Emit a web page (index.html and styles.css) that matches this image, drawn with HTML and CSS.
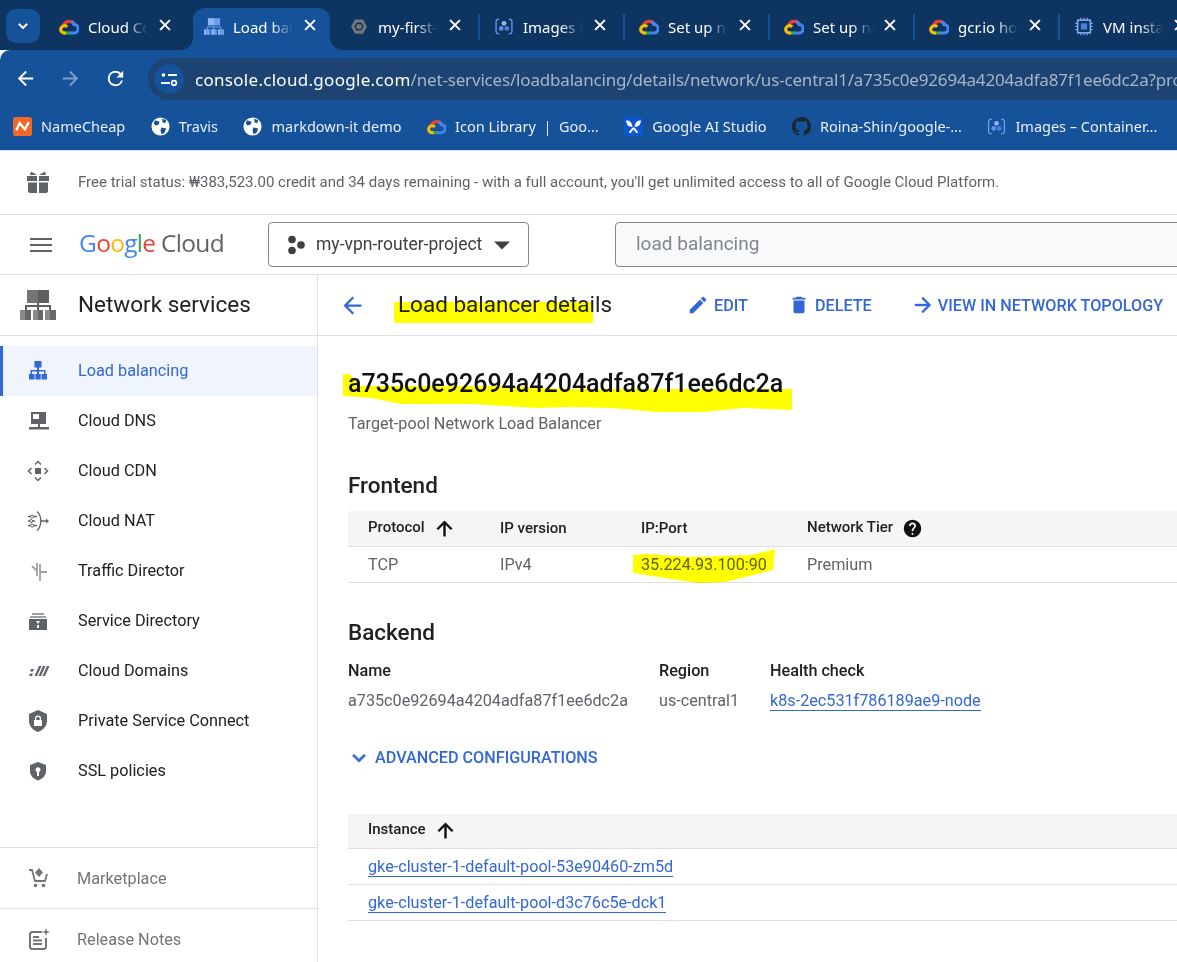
FILE: index.html
```html
<!DOCTYPE html>
<html lang="en">
<head>
    <meta charset="UTF-8">
    <title>Load balancer details</title>
    <link rel="stylesheet" href="styles.css">
</head>
<body>
    <svg class="defs" width="0" height="0">
        <symbol id="gcloud" viewBox="0 0 24 20">
            <path d="M5.500 8.500A7.300 7.300 0 0 1 18.300 7" fill="none" stroke="#ea4335" stroke-width="3.800"/>
            <path d="M15 4A7.300 7.300 0 0 1 18 7.500 5 5 0 0 1 17.800 17.800H12.500" fill="none" stroke="#4285f4" stroke-width="3.800"/>
            <path d="M5 17.800H13" fill="none" stroke="#34a853" stroke-width="3.800"/>
            <path d="M8.500 17.800H6.500A4.400 4.400 0 1 1 9.800 10.500" fill="none" stroke="#fbbc04" stroke-width="3.800"/>
        </symbol>
        <symbol id="globe" viewBox="0 0 20 20">
            <circle cx="10" cy="10" r="9.500" fill="#fff"/>
            <path d="M4 3.500 9 5 8 8 5 9 3 7zM11 11l5 1-2 5-3 1-1-4zM12 1.500l4 2-1 3-3-1z" fill="#16529a"/>
        </symbol>
        <symbol id="images" viewBox="0 0 24 24">
            <path d="M6 3H3.500L2 5v14l1.500 2H6M18 3h2.500L22 5v14l-1.500 2H18" fill="none" stroke="#6f9cf0" stroke-width="1.600"/>
            <circle cx="12" cy="8" r="3" fill="#8fb4f5"/>
            <circle cx="8.500" cy="14.500" r="3" fill="#5f8fe8"/>
            <circle cx="15.500" cy="14.500" r="3" fill="#4a7ddd"/>
        </symbol>
        <symbol id="topology" viewBox="0 0 36 30">
            <rect x="7" width="11" height="13" fill="#757575"/>
            <rect x="18" width="11" height="13" fill="#5f5f5f"/>
            <path d="M18 13v7M6 20v-4h24v4" fill="none" stroke="#5f5f5f" stroke-width="2"/>
            <rect y="20" width="5" height="10" fill="#8a8a8a"/>
            <rect x="5" y="20" width="6" height="10" fill="#666"/>
            <rect x="13" y="20" width="5" height="10" fill="#8a8a8a"/>
            <rect x="18" y="20" width="5" height="10" fill="#666"/>
            <rect x="25" y="20" width="5" height="10" fill="#8a8a8a"/>
            <rect x="30" y="20" width="6" height="10" fill="#666"/>
        </symbol>
        <symbol id="topology-blue" viewBox="0 0 36 30">
            <rect x="7" width="11" height="13" fill="#8fb4f5"/>
            <rect x="18" width="11" height="13" fill="#6f9cf0"/>
            <path d="M18 13v7M6 20v-4h24v4" fill="none" stroke="#6f9cf0" stroke-width="2"/>
            <rect y="20" width="5" height="10" fill="#8fb4f5"/>
            <rect x="5" y="20" width="6" height="10" fill="#6f9cf0"/>
            <rect x="13" y="20" width="5" height="10" fill="#8fb4f5"/>
            <rect x="18" y="20" width="5" height="10" fill="#6f9cf0"/>
            <rect x="25" y="20" width="5" height="10" fill="#8fb4f5"/>
            <rect x="30" y="20" width="6" height="10" fill="#6f9cf0"/>
        </symbol>
        <symbol id="close" viewBox="0 0 24 24">
            <path d="M19 6.410 17.590 5 12 10.590 6.410 5 5 6.410 10.590 12 5 17.590 6.410 19 12 13.410 17.590 19 19 17.590 13.410 12z"/>
        </symbol>
        <symbol id="arrow-up" viewBox="0 0 24 24">
            <path d="M4 12l1.410 1.410L11 7.830V20h2V7.830l5.580 5.590L20 12l-8-8-8 8z"/>
        </symbol>
    </svg>

    <div class="tabstrip">
        <button class="tab-menu">
            <svg width="18" height="18" viewBox="0 0 24 24"><path d="M16.590 8.590 12 13.170 7.410 8.590 6 10l6 6 6-6z" fill="#fff" stroke="#fff"/></svg>
        </button>
        <div class="tab">
            <svg class="tab-icon"><use href="#gcloud"/></svg>
            <span class="tab-title">Cloud Console</span>
            <svg class="tab-close"><use href="#close"/></svg>
        </div>
        <div class="tab tab-active">
            <svg class="tab-icon"><use href="#topology-blue"/></svg>
            <span class="tab-title">Load balancing</span>
            <svg class="tab-close"><use href="#close"/></svg>
        </div>
        <div class="tab tab-sep">
            <svg class="tab-icon" viewBox="0 0 24 24"><path d="M7 3h10l5 9-5 9H7l-5-9z" fill="#77777a"/><path d="M9 7h6l3 5-3 5H9l-3-5z" fill="#0e3461"/><path d="M10 9h4l2 3-2 3h-4l-2-3z" fill="#77777a"/></svg>
            <span class="tab-title">my-first-cluster</span>
            <svg class="tab-close"><use href="#close"/></svg>
        </div>
        <div class="tab tab-sep">
            <svg class="tab-icon"><use href="#images"/></svg>
            <span class="tab-title">Images for</span>
            <svg class="tab-close"><use href="#close"/></svg>
        </div>
        <div class="tab tab-sep">
            <svg class="tab-icon"><use href="#gcloud"/></svg>
            <span class="tab-title">Set up network</span>
            <svg class="tab-close"><use href="#close"/></svg>
        </div>
        <div class="tab tab-sep">
            <svg class="tab-icon"><use href="#gcloud"/></svg>
            <span class="tab-title">Set up network</span>
            <svg class="tab-close"><use href="#close"/></svg>
        </div>
        <div class="tab tab-sep">
            <svg class="tab-icon"><use href="#gcloud"/></svg>
            <span class="tab-title">gcr.io hosted</span>
            <svg class="tab-close"><use href="#close"/></svg>
        </div>
        <div class="tab tab-sep">
            <svg class="tab-icon" viewBox="0 0 24 24"><path d="M8 1v22M12 1v22M16 1v22M1 8h22M1 12h22M1 16h22" stroke="#7fa6ef" stroke-width="1.500"/><rect x="4" y="4" width="16" height="16" fill="#0e3461" stroke="#7fa6ef" stroke-width="2"/><rect x="8" y="8" width="8" height="8" fill="#4a7ddd"/></svg>
            <span class="tab-title">VM instances</span>
            <svg class="tab-close"><use href="#close"/></svg>
        </div>
    </div>

    <div class="toolbar">
        <svg class="nav-icon" viewBox="0 0 24 24"><path d="M20 11H7.830l5.590-5.590L12 4l-8 8 8 8 1.410-1.410L7.830 13H20z" fill="#fff"/></svg>
        <svg class="nav-icon" viewBox="0 0 24 24"><path d="M12 4l-1.410 1.410L16.170 11H4v2h12.170l-5.580 5.590L12 20l8-8z" fill="#7f9fc8"/></svg>
        <svg class="nav-icon" viewBox="0 0 24 24"><path d="M17.650 6.350A7.960 7.960 0 0 0 12 4a8 8 0 1 0 7.730 10h-2.080A6 6 0 1 1 12 6c1.660 0 3.140.690 4.220 1.780L13 11h7V4z" fill="#fff"/></svg>
        <div class="urlbar">
            <span class="site-info">
                <svg width="18" height="18" viewBox="0 0 18 18"><circle cx="3.500" cy="5" r="1.800" fill="#fff"/><path d="M8 5h9M1 13h9" stroke="#fff" stroke-width="1.800" fill="none"/><circle cx="14" cy="13" r="2.300" fill="none" stroke="#fff" stroke-width="1.700"/></svg>
            </span>
            <span class="url"><span class="url-host">console.cloud.google.com</span>/net-services/loadbalancing/details/network/us-central1/a735c0e92694a4204adfa87f1ee6dc2a?project=my-vpn-router-project</span>
        </div>
    </div>

    <div class="bookmarks">
        <span class="bookmark">
            <svg class="bm-icon" viewBox="0 0 20 20"><rect width="20" height="20" rx="3" fill="#f0682a"/><path d="M3.500 14 7 6.500 12.500 13 16.500 5.500" fill="none" stroke="#fff" stroke-width="2.400"/></svg>NameCheap
        </span>
        <span class="bookmark"><svg class="bm-icon"><use href="#globe"/></svg>Travis</span>
        <span class="bookmark"><svg class="bm-icon"><use href="#globe"/></svg>markdown-it demo</span>
        <span class="bookmark"><svg class="bm-icon"><use href="#gcloud"/></svg>Icon Library &nbsp;|&nbsp; Goo...</span>
        <span class="bookmark">
            <svg class="bm-icon" viewBox="0 0 20 20"><rect width="20" height="20" rx="2" fill="#0b57d0"/><path d="M2 4c3-1 6 1 7 6-4 1-6-1-7-6zM18 4c-3-1-6 1-7 6 4 1 6-1 7-6zM9 11l-4 5 2 1 3-4 3 4 2-1-4-5z" fill="#fff"/></svg>Google AI Studio
        </span>
        <span class="bookmark">
            <svg class="bm-icon" viewBox="0 0 16 16"><path fill="#1c2733" fill-rule="evenodd" d="M8 0C3.580 0 0 3.580 0 8c0 3.540 2.290 6.530 5.470 7.590.4.070.55-.17.55-.38 0-.19-.01-.82-.01-1.490-2.010.37-2.530-.49-2.690-.94-.09-.23-.48-.94-.82-1.130-.28-.15-.68-.52-.01-.53.63-.01 1.080.58 1.230.82.720 1.210 1.870.87 2.330.66.07-.52.28-.87.51-1.070-1.780-.2-3.640-.89-3.640-3.950 0-.87.31-1.590.82-2.150-.08-.2-.36-1.020.08-2.120 0 0 .67-.21 2.200.82.64-.18 1.320-.27 2-.27.68 0 1.360.09 2 .27 1.530-1.040 2.200-.82 2.200-.82.44 1.100.16 1.920.08 2.120.51.56.82 1.270.82 2.150 0 3.070-1.870 3.750-3.650 3.950.29.25.54.73.54 1.480 0 1.070-.01 1.930-.01 2.200 0 .21.15.46.55.38A8.013 8.013 0 0 0 16 8c0-4.420-3.580-8-8-8z"/></svg>Roina-Shin/google-...
        </span>
        <span class="bookmark"><svg class="bm-icon"><use href="#images"/></svg>Images – Container...</span>
    </div>

    <div class="trial-banner">
        <svg class="gift" width="24" height="24" viewBox="0 0 24 24"><path d="M1 6h10v5H1zM13 6h10v5H13zM2 12.500h9V23H3.500L2 21.500zM13 12.500h9v9L20.500 23H13zM5 1.500 11 5H4zM19 1.500 13 5h7z" fill="#5f6368"/></svg>
        <span>Free trial status: ₩383,523.00 credit and 34 days remaining - with a full account, you'll get unlimited access to all of Google Cloud Platform.</span>
    </div>

    <header class="topbar">
        <svg class="menu-icon" width="24" height="24" viewBox="0 0 24 24"><path d="M1 19h22v-2H1zm0-6h22v-2H1zm0-8v2h22V5z" fill="#5f6368"/></svg>
        <div class="logo"><span class="lg-word"><span class="lg-b">G</span><span class="lg-r">o</span><span class="lg-y">o</span><span class="lg-b">g</span><span class="lg-g">l</span><span class="lg-r">e</span></span> <span class="lg-cloud">Cloud</span></div>
        <div class="project-box">
            <svg width="18" height="20" viewBox="0 0 18 20"><circle cx="5" cy="4.500" r="3.800" fill="#3c4043"/><circle cx="14" cy="10" r="3.800" fill="#3c4043"/><circle cx="5" cy="15.500" r="3.800" fill="#3c4043"/></svg>
            <span class="project-name">my-vpn-router-project</span>
            <svg width="24" height="24" viewBox="0 0 24 24"><path d="M4 8.500l8 8 8-8z" fill="#3c4043"/></svg>
        </div>
        <div class="search-box">load balancing</div>
    </header>

    <div class="layout">
        <aside class="sidebar">
            <div class="side-title">
                <svg width="36" height="30"><use href="#topology"/></svg>
                <span>Network services</span>
            </div>
            <nav class="side-nav">
                <a class="nav-item nav-active">
                    <svg class="side-icon" viewBox="0 0 24 24"><path d="M8.500 2h7v6.500H13V11h6.500v4H21v5.500h-5.500V15H18v-2.500h-5V15h1.700v5.500H9.300V15H11v-2.500H6V15h2.500v5.500H3V15h1.500v-4H11V8.500H8.500z" fill="#3367d6"/></svg>
                    <span>Load balancing</span>
                </a>
                <a class="nav-item">
                    <svg class="side-icon" viewBox="0 0 24 24"><path fill-rule="evenodd" d="M5 3h15v12h-6v3h9v2.500H3V18h9v-3H5zm2 2v5h6V5z" fill="#5f6368"/></svg>
                    <span>Cloud DNS</span>
                </a>
                <a class="nav-item">
                    <svg class="side-icon" viewBox="0 0 24 24"><rect x="9" y="9" width="6" height="6" fill="#5f6368"/><path d="M9 5.500 12 2.500l3 3M9 18.500l3 3 3-3M5.500 9l-3 3 3 3M18.500 9l3 3-3 3" fill="none" stroke="#5f6368" stroke-width="1.500"/></svg>
                    <span>Cloud CDN</span>
                </a>
                <a class="nav-item">
                    <svg class="side-icon" viewBox="0 0 24 24"><path d="M11 2.500c5 4 5 15 0 19M2 7.500h9M2 12h7M2 16.500h9M15 12h6" fill="none" stroke="#5f6368" stroke-width="1.300"/><circle cx="6" cy="7.500" r="1.500" fill="#fff" stroke="#5f6368"/><circle cx="5" cy="12" r="1.500" fill="#fff" stroke="#5f6368"/><circle cx="6" cy="16.500" r="1.500" fill="#fff" stroke="#5f6368"/><path d="M20 9.500 23 12l-3 2.500z" fill="#5f6368"/></svg>
                    <span>Cloud NAT</span>
                </a>
                <a class="nav-item">
                    <svg class="side-icon" viewBox="0 0 24 24"><path d="M6 7l5 5M11 4v13M14 5v17M14 13h7" fill="none" stroke="#9aa0a6" stroke-width="1.800"/></svg>
                    <span>Traffic Director</span>
                </a>
                <a class="nav-item">
                    <svg class="side-icon" viewBox="0 0 24 24"><path d="M6 4h12v2H6zM4 7h16v2H4z" fill="#9aa0a6"/><path fill-rule="evenodd" d="M3 10h18v11H3zm7 2 2 3 2-3zm1 4v3h2v-3z" fill="#5f6368"/></svg>
                    <span>Service Directory</span>
                </a>
                <a class="nav-item">
                    <svg class="side-icon" viewBox="0 0 24 24"><path d="M5 10h3l-1 2.500H4zM4 14.500h3L6 17H3zM13 7h2.500l-4.500 10H8.500zM17 7h2.500L15 17h-2.500zM21 7h2.500L19 17h-2.500z" fill="#5f6368"/></svg>
                    <span>Cloud Domains</span>
                </a>
                <a class="nav-item">
                    <svg class="side-icon" viewBox="0 0 24 24"><path fill-rule="evenodd" d="M12 1l9 4v7c0 5-4 9.500-9 11-5-1.500-9-6-9-11V5zM8 11v6h8v-6h-1V9.500a3 3 0 0 0-6 0V11zm2.300 0V9.500a1.700 1.700 0 0 1 3.400 0V11z" fill="#5f6368"/></svg>
                    <span>Private Service Connect</span>
                </a>
                <a class="nav-item">
                    <svg class="side-icon" viewBox="0 0 24 24"><path fill-rule="evenodd" d="M12 3l8 3v6c0 4.500-3.500 8-8 9.500C7.500 20 4 16.500 4 12V6zm-1 10v4h2v-4a2.500 2.500 0 1 0-2 0z" fill="#5f6368"/></svg>
                    <span>SSL policies</span>
                </a>
            </nav>
            <a class="foot-item">
                <svg class="side-icon" viewBox="0 0 24 24"><path d="M3 4h3l3 11h10l2-7" fill="none" stroke="#757575" stroke-width="1.800"/><path d="M13 2l4 4.500-4 4.500-4-4.500z" fill="#757575"/><circle cx="9.500" cy="19.500" r="1.800" fill="#757575"/><circle cx="17.500" cy="19.500" r="1.800" fill="#757575"/></svg>
                Marketplace
            </a>
            <a class="foot-item foot-last">
                <svg class="side-icon" viewBox="0 0 24 24"><path d="M16 5H5.500L4 6.500v14L5.500 22h13l1.500-1.500V11" fill="none" stroke="#757575" stroke-width="2"/><path d="M7 10h6M7 13.500h9M7 17h9" stroke="#757575" stroke-width="1.800"/><path d="M20 1l1 3 3 1-3 1-1 3-1-3-3-1 3-1z" fill="#757575"/></svg>
                Release Notes
            </a>
        </aside>

        <main class="main">
            <div class="page-head">
                <svg class="back" width="27" height="27" viewBox="0 0 24 24"><path d="M20 11H7.830l5.590-5.590L12 4l-8 8 8 8 1.410-1.410L7.830 13H20z" fill="#3367d6"/></svg>
                <h1 class="page-title">Load balancer details</h1>
                <a class="action">
                    <svg width="22" height="22" viewBox="0 0 24 24"><path d="M3 17.250V21h3.750L17.810 9.940l-3.750-3.750zM20.710 7.040a1 1 0 0 0 0-1.410l-2.340-2.340a1 1 0 0 0-1.410 0l-1.830 1.830 3.750 3.750z"/></svg>EDIT
                </a>
                <a class="action action-delete">
                    <svg width="22" height="22" viewBox="0 0 24 24"><path d="M6 19c0 1.100.9 2 2 2h8c1.100 0 2-.9 2-2V7H6zM19 4h-3.500l-1-1h-5l-1 1H5v2h14z"/></svg>DELETE
                </a>
                <a class="action action-topo">
                    <svg width="24" height="24" viewBox="0 0 24 24"><path d="M12 4l-1.410 1.410L16.170 11H4v2h12.170l-5.580 5.590L12 20l8-8z" stroke="#3367d6" stroke-width=".4"/></svg>VIEW IN NETWORK TOPOLOGY
                </a>
            </div>

            <div class="content">
                <h2 class="lb-name">a735c0e92694a4204adfa87f1ee6dc2a</h2>
                <p class="lb-type">Target-pool Network Load Balancer</p>

                <h3 class="section-title section-front">Frontend</h3>
                <table class="data-table frontend-table">
                    <tr>
                        <th class="col-proto">Protocol <svg class="sort"><use href="#arrow-up"/></svg></th>
                        <th class="col-ver">IP version</th>
                        <th class="col-ip">IP:Port</th>
                        <th>Network Tier <svg class="help" viewBox="0 0 24 24"><path d="M12 2a10 10 0 1 0 0 20 10 10 0 0 0 0-20zm1 17h-2v-2h2zm2.070-7.750-.9.920C13.450 12.900 13 13.500 13 15h-2v-.5c0-1.100.45-2.100 1.170-2.830l1.240-1.260c.37-.36.59-.86.59-1.410a2 2 0 0 0-4 0H8a4 4 0 0 1 8 0c0 .88-.36 1.680-.93 2.250z"/></svg></th>
                    </tr>
                    <tr>
                        <td>TCP</td>
                        <td>IPv4</td>
                        <td>35.224.93.100:90</td>
                        <td>Premium</td>
                    </tr>
                </table>

                <h3 class="section-title section-back">Backend</h3>
                <div class="backend-grid">
                    <div class="field-label">Name</div>
                    <div class="field-label">Region</div>
                    <div class="field-label">Health check</div>
                    <div class="field-value">a735c0e92694a4204adfa87f1ee6dc2a</div>
                    <div class="field-value">us-central1</div>
                    <div><a class="link">k8s-2ec531f786189ae9-node</a></div>
                </div>

                <a class="advanced">
                    <svg width="26" height="26" viewBox="0 0 24 24"><path d="M16.590 8.590 12 13.170 7.410 8.590 6 10l6 6 6-6z" stroke="#3367d6" stroke-width=".6"/></svg>
                    ADVANCED CONFIGURATIONS
                </a>

                <table class="data-table instance-table">
                    <tr><th>Instance <svg class="sort"><use href="#arrow-up"/></svg></th></tr>
                    <tr><td><a class="link">gke-cluster-1-default-pool-53e90460-zm5d</a></td></tr>
                    <tr><td><a class="link">gke-cluster-1-default-pool-d3c76c5e-dck1</a></td></tr>
                </table>
            </div>
        </main>
    </div>

    <!-- marker scribbles drawn over the screenshot -->
    <svg class="marker-layer" width="1177" height="962" viewBox="0 0 1177 962">
        <path d="M394 302H593V323H394z"/>
        <path d="M343 374H350L360 386 500 386 570 389 783 389 792 389V410L743 408 703 412 657 412 613 408 570 407 538 408 471 404 401 404 371 398 343 396z"/>
        <path d="M633 555 645 554 692 557 752 555 775 549 773 570 725 582 698 583 658 577 633 573z"/>
    </svg>
</body>
</html>
```

FILE: styles.css
```css
* {
    box-sizing: border-box;
}
html, body {
    height: 100%;
}
body {
    margin: 0;
    display: flex;
    flex-direction: column;
    overflow: hidden;
    position: relative;
    font-family: Roboto, "Liberation Sans", sans-serif;
    color: #202124;
    background: #fff;
}
.defs {
    position: absolute;
}
a {
    text-decoration: none;
}

/* browser chrome */
.tabstrip {
    display: flex;
    flex: none;
    height: 50px;
    padding: 8px 0 0 6px;
    background: #0e3461;
    overflow: hidden;
    font-family: "Noto Sans", sans-serif;
    font-size: 15px;
    color: #fff;
}
.tab-menu {
    flex: none;
    width: 34px;
    height: 34px;
    margin: 1px 8px 0 0;
    padding: 0;
    border: none;
    border-radius: 10px;
    background: #16529a;
    display: flex;
    align-items: center;
    justify-content: center;
}
.tab {
    flex: none;
    position: relative;
    display: flex;
    align-items: center;
    width: 137px;
    height: 42px;
    margin-right: 8px;
    padding: 0 11px 0 11px;
}
.tab-active {
    background: #16529a;
    border-radius: 12px 12px 0 0;
}
.tab-active::before, .tab-active::after {
    content: "";
    position: absolute;
    bottom: 0;
    width: 12px;
    height: 12px;
}
.tab-active::before {
    left: -12px;
    background: radial-gradient(circle at 0 0, transparent 11.500px, #16529a 12px);
}
.tab-active::after {
    right: -12px;
    background: radial-gradient(circle at 100% 0, transparent 11.500px, #16529a 12px);
}
.tab-sep::after {
    content: "";
    position: absolute;
    right: -5px;
    top: 6px;
    width: 2px;
    height: 26px;
    background: #16529a;
}
.tab-icon {
    flex: none;
    width: 20px;
    height: 19px;
    margin-top: -6px;
}
.tab-title {
    flex: 1;
    min-width: 0;
    margin: -4px 5px 0 9px;
    white-space: nowrap;
    overflow: hidden;
    -webkit-mask-image: linear-gradient(to right, #000 60%, transparent 95%);
    mask-image: linear-gradient(to right, #000 60%, transparent 95%);
}
.tab-close {
    flex: none;
    width: 18px;
    height: 18px;
    margin-top: -8px;
    fill: #fff;
    stroke: #fff;
    stroke-width: 0.800;
}
.toolbar {
    flex: none;
    height: 50px;
    display: flex;
    align-items: flex-end;
    padding-left: 14px;
    background: #16529a;
    border-top-left-radius: 10px;
    overflow: hidden;
    font-family: "Noto Sans", sans-serif;
}
.nav-icon {
    flex: none;
    width: 23px;
    height: 23px;
    margin: 0 22px 10px 0;
}
.urlbar {
    flex: none;
    width: 1100px;
    height: 42px;
    margin-left: -1px;
    display: flex;
    align-items: center;
    padding-left: 6px;
    border-radius: 21px 0 0 21px;
    background: #1c4371;
    font-size: 17px;
    letter-spacing: -0.18px;
    color: #a4b6cc;
    white-space: nowrap;
}
.site-info {
    flex: none;
    width: 30px;
    height: 30px;
    border-radius: 50%;
    background: #16529a;
    display: flex;
    align-items: center;
    justify-content: center;
    margin-right: 11px;
}
.url-host {
    color: #fff;
    letter-spacing: 0.29px;
}
.bookmarks {
    flex: none;
    height: 50px;
    display: flex;
    align-items: center;
    gap: 25.500px;
    padding: 2px 0 0 13px;
    background: #16529a;
    overflow: hidden;
    font-family: "Noto Sans", sans-serif;
    font-size: 14.500px;
    color: #e8eef6;
    white-space: nowrap;
}
.bookmark {
    flex: none;
    display: flex;
    align-items: center;
}
.bm-icon {
    width: 19px;
    height: 19px;
    margin-right: 9px;
}

/* console header */
.trial-banner {
    flex: none;
    height: 65px;
    display: flex;
    align-items: center;
    padding: 0 0 2px 26px;
    border-top: 1px solid #d5dde8;
    border-bottom: 1px solid #e0e0e0;
    font-size: 15px;
    color: #5f6368;
    white-space: nowrap;
}
.gift {
    flex: none;
    margin-right: 28px;
}
.topbar {
    flex: none;
    height: 60px;
    display: flex;
    align-items: center;
    padding-left: 29px;
    border-bottom: 1px solid #e0e0e0;
}
.menu-icon {
    flex: none;
    margin-right: 26px;
}
.logo {
    flex: none;
    width: 189px;
    margin-top: -4px;
    font-family: "Open Sans", sans-serif;
    font-size: 24.500px;
    letter-spacing: -0.7px;
    white-space: nowrap;
}
.lg-word { font-weight: 500; }
.lg-b { color: #4285f4; }
.lg-r { color: #ea4335; }
.lg-y { color: #fbbc04; }
.lg-g { color: #34a853; }
.lg-cloud { color: #5f6368; }
.project-box {
    flex: none;
    width: 261px;
    height: 45px;
    display: flex;
    align-items: center;
    padding-left: 18px;
    border: 1px solid #80868b;
    border-radius: 4px;
    font-size: 17.500px;
    color: #3c4043;
}
.project-name {
    margin: -2px 8px 0 11px;
}
.search-box {
    flex: none;
    width: 620px;
    height: 45px;
    margin-left: 86px;
    padding-left: 20px;
    border: 1px solid #80868b;
    border-radius: 4px;
    background: #f8f9fa;
    font-size: 19px;
    line-height: 42px;
    color: #80868b;
}

/* page */
.layout {
    flex: 1;
    min-height: 0;
    display: flex;
}
.sidebar {
    flex: none;
    width: 318px;
    display: flex;
    flex-direction: column;
    border-right: 1px solid #e0e0e0;
}
.side-title {
    flex: none;
    height: 61px;
    display: flex;
    align-items: center;
    padding-left: 20px;
    border-bottom: 1px solid #e0e0e0;
    font-size: 22.500px;
    color: #202124;
}
.side-title span {
    margin: -2px 0 0 22px;
}
.side-nav {
    flex: 1;
    padding-top: 10px;
}
.nav-item {
    display: flex;
    align-items: center;
    height: 50px;
    padding-left: 26px;
    font-size: 16.250px;
    color: #202124;
}
.nav-item span {
    margin-top: -2px;
}
.nav-active {
    padding-left: 23px;
    border-left: 3px solid #3367d6;
    background: #eff4fd;
    color: #3367d6;
}
.side-icon {
    flex: none;
    width: 24px;
    height: 24px;
    margin-right: 28px;
}
.foot-item {
    flex: none;
    display: flex;
    align-items: center;
    height: 61px;
    padding-left: 26px;
    border-top: 1px solid #e0e0e0;
    font-size: 16.250px;
    color: #757575;
}
.foot-item .side-icon {
    margin-right: 27px;
}
.foot-last {
    margin-bottom: -7px;
}
.main {
    flex: 1;
    min-width: 0;
}
.page-head {
    height: 61px;
    display: flex;
    align-items: center;
    padding-left: 21px;
    border-bottom: 1px solid #e0e0e0;
}
.back {
    flex: none;
}
.page-title {
    margin: -2px 0 0 32px;
    width: 289px;
    font-size: 22.500px;
    font-weight: 400;
    color: #202124;
}
.action {
    flex: none;
    display: flex;
    align-items: center;
    gap: 5px;
    font-size: 16.200px;
    font-weight: 500;
    color: #3367d6;
    fill: #3367d6;
}
.action-delete {
    margin-left: 40px;
}
.action-topo {
    margin-left: 39px;
    gap: 3px;
}
.content {
    padding-left: 30px;
}
.lb-name {
    margin: 32px 0 0;
    font-size: 25px;
    line-height: 32px;
    font-weight: 500;
    color: #111;
}
.lb-type {
    margin: 12px 0 0;
    font-size: 16.200px;
    line-height: 24px;
    color: #5f6368;
}
.section-title {
    margin: 0;
    font-size: 22.500px;
    line-height: 28px;
    font-weight: 500;
    color: #202124;
}
.section-front {
    margin-top: 35px;
}
.section-back {
    margin-top: 35px;
}
.data-table {
    width: 829px;
    border-collapse: collapse;
    table-layout: fixed;
}
.data-table th {
    height: 35px;
    padding: 0 0 0 20px;
    background: #f5f5f5;
    border-bottom: 1px solid #e0e0e0;
    font-size: 15px;
    font-weight: 500;
    text-align: left;
    color: #202124;
}
.data-table td {
    height: 36px;
    padding: 0 0 0 20px;
    border-bottom: 1px solid #e0e0e0;
    font-size: 16.200px;
    color: #5f6368;
}
.frontend-table {
    margin-top: 12px;
}
.col-proto {
    width: 132px;
}
.col-ver {
    width: 141px;
}
.col-ip {
    width: 166px;
}
.sort {
    width: 23px;
    height: 23px;
    margin-left: 5px;
    vertical-align: middle;
    fill: #111;
    stroke: #111;
    stroke-width: 0.500;
}
.help {
    width: 21px;
    height: 21px;
    margin-left: 5px;
    vertical-align: middle;
    fill: #111;
}
.backend-grid {
    display: grid;
    grid-template-columns: 311px 111px 1fr;
    grid-auto-rows: 30px;
    align-items: center;
    margin-top: 10px;
    font-size: 16.200px;
}
.field-label {
    font-weight: 500;
    color: #202124;
}
.field-value {
    color: #5f6368;
}
.link {
    color: #3367d6;
    border-bottom: 1px solid #3367d6;
}
.advanced {
    display: flex;
    align-items: center;
    gap: 3px;
    margin: 29px 0 0 -2px;
    font-size: 16.200px;
    font-weight: 500;
    color: #3367d6;
    fill: #3367d6;
}
.instance-table {
    margin-top: 43px;
}

/* yellow marker, multiplied so the text stays readable */
.marker-layer {
    position: absolute;
    left: 0;
    top: 0;
    pointer-events: none;
    mix-blend-mode: multiply;
    fill: #ffff00;
}
```
